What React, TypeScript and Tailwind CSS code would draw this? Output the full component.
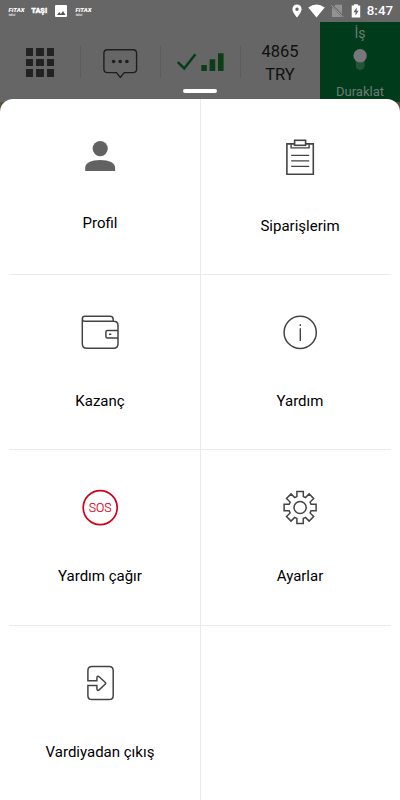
import type { ReactNode } from "react";

const ink = "#444446";

const gearPoints = Array.from({ length: 8 }, (_, i) => {
  const a = (i * Math.PI) / 4;
  const corners = [
    [-3.2, -10.9],
    [-3.2, -16],
    [3.2, -16],
    [3.2, -10.9],
  ];
  return corners
    .map(([x, y]) => `${x * Math.cos(a) - y * Math.sin(a)},${x * Math.sin(a) + y * Math.cos(a)}`)
    .join(" ");
}).join(" ");

function Icon({ children }: { children: ReactNode }) {
  return (
    <svg className="h-10 w-10" viewBox="0 0 40 40" fill="none" stroke={ink} strokeWidth="1.5">
      {children}
    </svg>
  );
}

const icons = {
  profile: (
    <Icon>
      <g fill="#626262" stroke="none">
        <circle cx="20.2" cy="11.6" r="7.6" />
        <path d="M5.2 34v-3.2c0-4.8 6-7.8 15-7.8s14.9 3 14.9 7.8V34z" />
      </g>
    </Icon>
  ),
  orders: (
    <Icon>
      <path d="M14.3 6.9H6.9V37.2H33.3V6.9H25.9" strokeWidth="1.6" />
      <path d="M11.1 6.9V10.9H29.1V6.9" strokeWidth="1.4" />
      <rect x="14.6" y="3.3" width="11" height="5" strokeWidth="1.6" />
      <path d="M11.2 18.4H29.2M11.2 23.9H29.2M11.2 29.4H29.2" strokeWidth="1.4" />
    </Icon>
  ),
  wallet: (
    <Icon>
      <path d="M2.3 7.2V31.8Q2.3 36.3 6.8 36.3H33.5Q38 36.3 38 31.8V13.5Q38 9.2 33.7 9.2H5Q2.3 9.2 2.3 6.9Q2.3 4.2 5 4.2H30Q33.2 4.2 33.2 7.4V9.2" />
      <path d="M38 18.4H27.4Q25.9 18.4 25.9 19.9V24.5Q25.9 26 27.4 26H38M29 22.2h2.3" />
    </Icon>
  ),
  info: (
    <Icon>
      <circle cx="20.2" cy="20.4" r="16.1" />
      <path d="M20.3 16.3V29M20.3 12.2v1.9" strokeWidth="1.4" />
    </Icon>
  ),
  sos: (
    <Icon>
      <circle cx="20.2" cy="20.6" r="17" stroke="#d0021b" strokeWidth="1.7" />
      <text x="20.2" y="25" textAnchor="middle" textLength="22.8" lengthAdjust="spacingAndGlyphs" fill="#d0021b" stroke="#d0021b" strokeWidth=".15" fontSize="12" className="font-[Roboto] font-light">
        SOS
      </text>
    </Icon>
  ),
  settings: (
    <Icon>
      <g transform="translate(20.1 20.5)" strokeWidth="1.5">
        <polygon points={gearPoints} />
        <circle r="6.1" />
      </g>
    </Icon>
  ),
  exit: (
    <Icon>
      <path d="M7.9 17.8V7.6Q7.9 3.5 12 3.5H29Q33.2 3.5 33.2 7.6V32.5Q33.2 36.6 29 36.6H12Q7.9 36.6 7.9 32.5V22.6H16.9V25.6Q17.1 28.7 19.4 26.6L25.1 21.3Q26.3 20.3 25.1 19.3L19.4 14Q17.1 12 16.9 15V17.8H7.2" />
    </Icon>
  ),
};

function Tile({
  icon,
  label,
  top = "pt-[37px]",
  gap = "mt-[39px]",
}: {
  icon: ReactNode;
  label: string;
  top?: string;
  gap?: string;
}) {
  return (
    <div className={`flex h-full flex-col items-center ${top}`}>
      {icon}
      <span className={`${gap} text-[15px] leading-5 text-black`}>{label}</span>
    </div>
  );
}

function FitaxMark() {
  return (
    <svg className="h-3 w-[17px] font-black italic" viewBox="0 0 17 12" fill="white">
      <text x="0.5" y="7" fontSize="6" textLength="16" lengthAdjust="spacingAndGlyphs">FiTAX</text>
      <text x="0.8" y="11" fontSize="3" opacity=".7">taksi</text>
    </svg>
  );
}

function StatusBar() {
  return (
    <div className="flex h-[22px] items-center justify-between pr-[7px] pl-2 text-white">
      <div className="flex items-center">
        <FitaxMark />
        <svg className="ml-1.5 h-3 w-[17px] font-black" viewBox="0 0 17 12" fill="white">
          <text x="0.2" y="8" fontSize="7" textLength="16" lengthAdjust="spacingAndGlyphs" stroke="white" strokeWidth=".3">TAŞI</text>
        </svg>
        <svg className="ml-[7px] h-3 w-3" viewBox="0 0 12 12">
          <rect width="12" height="12" rx="1" fill="white" />
          <path d="M2 10l2.3-3 1.6 1.9L8 6l2.5 4z" fill="#555" />
        </svg>
        <span className="ml-2 flex"><FitaxMark /></span>
      </div>
      <div className="flex items-center">
        <svg className="h-[14px] w-[10px]" viewBox="0 0 10 14">
          <path d="M5 .5a4.6 4.6 0 0 0-4.6 4.6C.4 8.5 5 13.6 5 13.6s4.6-5.1 4.6-8.5A4.6 4.6 0 0 0 5 .5zm0 3a1.7 1.7 0 1 1 0 3.4 1.7 1.7 0 0 1 0-3.4z" fill="white" fillRule="evenodd" />
        </svg>
        <svg className="ml-1.5 h-[14px] w-[17px]" viewBox="0 0 17 14">
          <path d="M.3 3.4Q8.5-2.2 16.7 3.4L8.5 13.6z" fill="white" />
        </svg>
        <svg className="ml-1.5 h-[14px] w-[13px]" viewBox="0 0 13 14">
          <path d="M4.5.8H11V13H1V4.2z" fill="#929292" />
          <path d="M.3.8l12 12" stroke="#666" strokeWidth="2.2" />
          <path d="M.3 1.2l12 12" stroke="#a0a0a0" />
        </svg>
        <svg className="ml-[7px] h-[14px] w-[10px]" viewBox="0 0 10 14">
          <path d="M.7 1.6h2.2V.2h4v1.4h2.3v12H.7z" fill="white" />
          <path d="M5.7 3.5L2.5 8.2h2v3.3l3.2-4.7h-2z" fill="#666" />
        </svg>
        <span className="ml-1.5 text-[13.3px] leading-[22px] font-medium">8:47</span>
      </div>
    </div>
  );
}

function Toolbar() {
  return (
    <div className="grid h-20 grid-cols-5">
      <div className="flex items-start justify-center pt-[26px]">
        <div className="grid grid-cols-3 gap-[3px]">
          {Array.from({ length: 9 }, (_, i) => (
            <span key={i} className="h-[7.5px] w-[7.5px] bg-[#222]" />
          ))}
        </div>
      </div>
      <div className="relative">
        <span className="absolute top-6 left-0 h-8 w-px bg-[#5c5c5c]" />
        <svg className="mx-auto mt-[26px] h-8 w-9" viewBox="0 0 36 32" fill="none" stroke="#1e1e1e" strokeWidth="1.4">
          <path d="M5.5 1.8H31Q34.6 1.8 34.6 5.4V21Q34.6 24.6 31 24.6H22.2L18.3 29.4L14.5 24.6H5.5Q1.9 24.6 1.9 21V5.4Q1.9 1.8 5.5 1.8Z" />
          <g fill="#1e1e1e" stroke="none">
            <circle cx="11.6" cy="13.5" r="1.8" />
            <circle cx="18.2" cy="13.5" r="1.8" />
            <circle cx="24.9" cy="13.5" r="1.8" />
          </g>
        </svg>
      </div>
      <div className="relative">
        <span className="absolute top-6 left-0 h-8 w-px bg-[#5c5c5c]" />
        <svg className="mt-7 ml-4 h-6 w-12" viewBox="0 0 48 24">
          <path d="M1.8 12.1L8.2 18.4L19.4 4.2" fill="none" stroke="#003d18" strokeWidth="2.5" />
          <path d="M25.3 15h5.5v6h-5.5zM33.6 9.2h5.6V21h-5.6zM42 3.3h5.6V21H42z" fill="#0d3d17" />
        </svg>
      </div>
      <div className="relative pt-[19px] text-center text-[16.5px] leading-[22.5px] text-[#101010]">
        <span className="absolute top-6 left-0 h-8 w-px bg-[#5c5c5c]" />
        <div>4865</div>
        <div>TRY</div>
      </div>
      <div className="flex flex-col items-center bg-[#003b1c] text-[13px] leading-5 text-[#6c7b71]">
        <span className="mt-px text-[14px]">İş</span>
        <svg className="mt-[5px] h-6 w-4" viewBox="0 0 16 24">
          <rect x="3.7" y="3" width="9" height="19" rx="4.5" fill="#235437" />
          <circle cx="8.1" cy="7.8" r="6.7" fill="#777" />
        </svg>
        <span className="mt-2.5">Duraklat</span>
      </div>
    </div>
  );
}

export default function App() {
  return (
    <div className="flex h-[800px] w-[400px] flex-col overflow-hidden bg-[#5b513a] font-[Roboto,sans-serif]">
      <header className="relative h-[102px] shrink-0 bg-[#666]">
        <StatusBar />
        <Toolbar />
        <span className="absolute top-[89px] left-[183px] h-[4px] w-[34px] rounded-full bg-white" />
      </header>
      <main className="relative -mt-[3px] grid flex-1 grid-cols-2 grid-rows-[176px_175px_176px_1fr] rounded-t-[13px] bg-white">
        <div className="ml-[9px] border-b border-[#ebebeb] pr-[9px]"><Tile icon={icons.profile} label="Profil" top="pt-[38px]" gap="mt-9" /></div>
        <div className="mr-[9px] border-b border-l border-[#ebebeb] pl-2"><Tile icon={icons.orders} label="Siparişlerim" top="pt-[38px]" /></div>
        <div className="ml-[9px] border-b border-[#ebebeb] pr-[9px]"><Tile icon={icons.wallet} label="Kazanç" /></div>
        <div className="mr-[9px] border-b border-l border-[#ebebeb] pl-2"><Tile icon={icons.info} label="Yardım" /></div>
        <div className="ml-[9px] border-b border-[#ebebeb] pr-[9px]"><Tile icon={icons.sos} label="Yardım çağır" /></div>
        <div className="mr-[9px] border-b border-l border-[#ebebeb] pl-2"><Tile icon={icons.settings} label="Ayarlar" /></div>
        <div className="ml-[9px] pr-[9px]"><Tile icon={icons.exit} label="Vardiyadan çıkış" /></div>
        <div className="border-l border-[#ebebeb]" />
      </main>
    </div>
  );
}
